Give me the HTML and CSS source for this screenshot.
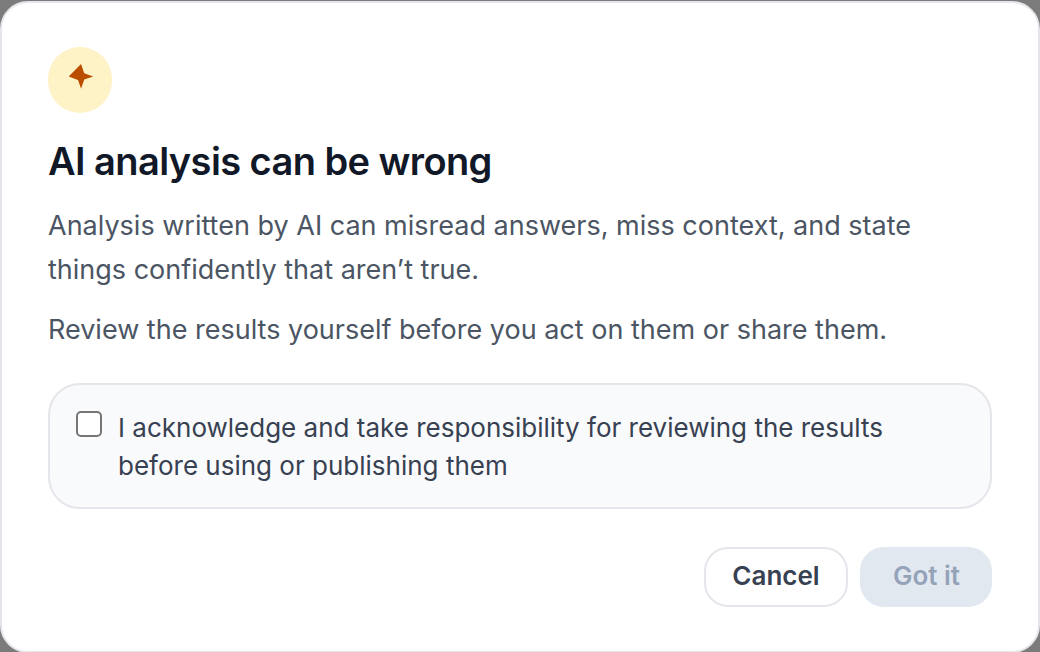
FILE: index.html
```html
<!DOCTYPE html>
<html lang="en">
<head>
<meta charset="utf-8">
<title>AI analysis can be wrong</title>
<link rel="stylesheet" href="styles.css">
</head>
<body>
<main class="dialog" role="dialog" aria-labelledby="title">
  <div class="badge">
    <svg class="spark" viewBox="0 0 26 26" aria-hidden="true"><path d="M14 0 17.2 9.3 26.2 12.4 17.2 15.6 14.1 24.7 11 16 1.7 12.4Z"/></svg>
  </div>
  <h1 class="title" id="title">AI analysis can be wrong</h1>
  <p class="text">Analysis written by AI can misread answers, miss context, and state things confidently that aren’t true.</p>
  <p class="text">Review the results yourself before you act on them or share them.</p>
  <label class="ack">
    <input class="check" type="checkbox">
    <span class="ack-text">I acknowledge and take responsibility for reviewing the results before using or publishing them</span>
  </label>
  <div class="actions">
    <button class="btn cancel">Cancel</button>
    <button class="btn confirm" disabled>Got it</button>
  </div>
</main>
</body>
</html>
```
FILE: styles.css
```css
* { box-sizing: border-box; }
body { margin: 0; height: 652px; padding-top: 1px; overflow: hidden; background: #7b7b7b; font-family: Inter, sans-serif; }
.dialog { height: 652px; padding: 44px 46px; background: #fff; border: 2px solid #e5e5eb; border-radius: 28px; }
.badge { display: flex; justify-content: center; width: 64px; height: 66px; padding-top: 17px; border-radius: 32px; background: #fef3c7; }
.spark { width: 26px; height: 26px; overflow: visible; fill: #bb4d00; }
.title { margin: 23px 0 0; font-size: 38px; line-height: 50px; font-weight: 600; letter-spacing: -0.58px; color: #111827; }
.text { margin: 16px 0 0; font-size: 27px; line-height: 44px; color: #4b5563; }
.title + .text { margin-top: 18px; }
.ack { display: flex; gap: 16px; height: 126px; margin-top: 31px; padding: 24px 26px; border: 2px solid #e5e5eb; border-radius: 32px; background: #f9fafc; }
.check { appearance: none; flex: none; width: 26px; height: 26px; margin: 2px 0 0; border: 2px solid #767676; border-radius: 5px; background: #fff; }
.ack-text { font-size: 26px; line-height: 38px; color: #374151; }
.actions { display: flex; justify-content: flex-end; gap: 12px; margin-top: 38px; }
.btn { height: 60px; padding: 0 0 2px; border: 2px solid #e5e5eb; border-radius: 24px; background: #fff; font: 600 26px/54px Inter, sans-serif; color: #374151; }
.cancel { width: 144px; }
.confirm { width: 132px; padding-left: 1px; border-color: #e2e8f0; background: #e2e8f0; color: #94a3b8; }
```
